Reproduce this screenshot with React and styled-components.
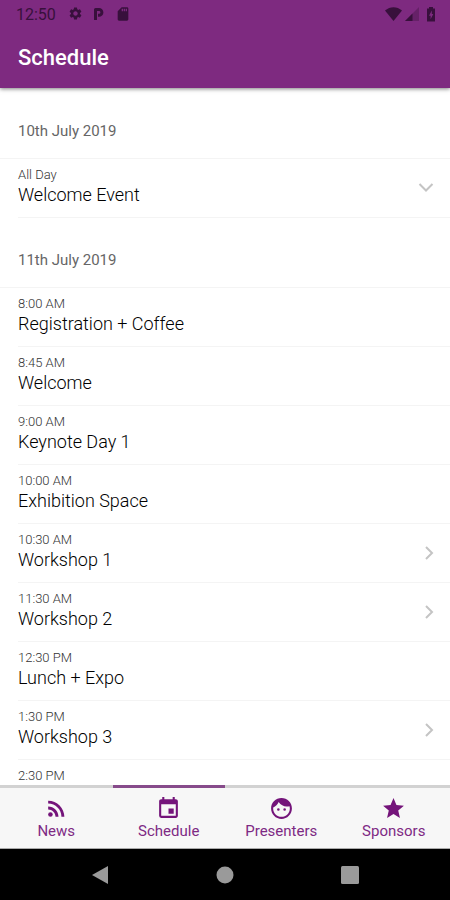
import styled, { createGlobalStyle } from "styled-components";
import {
  MdEvent,
  MdFace,
  MdRssFeed,
  MdSdCard,
  MdSettings,
  MdStar,
} from "react-icons/md";

const days = [
  {
    date: "10th July 2019",
    events: [{ time: "All Day", title: "Welcome Event", more: "down" }],
  },
  {
    date: "11th July 2019",
    events: [
      { time: "8:00 AM", title: "Registration + Coffee" },
      { time: "8:45 AM", title: "Welcome" },
      { time: "9:00 AM", title: "Keynote Day 1" },
      { time: "10:00 AM", title: "Exhibition Space" },
      { time: "10:30 AM", title: "Workshop 1", more: "right" },
      { time: "11:30 AM", title: "Workshop 2", more: "right" },
      { time: "12:30 PM", title: "Lunch + Expo" },
      { time: "1:30 PM", title: "Workshop 3", more: "right" },
      { time: "2:30 PM", title: "" },
    ],
  },
];

const tabs = [
  { label: "News", Icon: MdRssFeed },
  { label: "Schedule", Icon: MdEvent },
  { label: "Presenters", Icon: MdFace },
  { label: "Sponsors", Icon: MdStar },
];

const Chevron = ({ direction }) => (
  <ChevronIcon viewBox="0 0 16 16" aria-hidden="true">
    {direction === "down" ? (
      <path d="M1.5 4 8 10.500l6.500-6.500" />
    ) : (
      <path d="M5 2l6 6-6 6" />
    )}
  </ChevronIcon>
);

const StatusBar = () => (
  <Status>
    <span>12:50</span>
    <StatusIcons>
      <MdSettings size={15} />
      <svg width="12" height="15" viewBox="0 0 12 15">
        <path
          d="M2.500 14V3.500H6a2.900 2.900 0 0 1 0 5.800H5"
          fill="none"
          stroke="currentColor"
          strokeWidth="3"
          strokeLinejoin="round"
        />
      </svg>
      <MdSdCard size={16} />
    </StatusIcons>
    <Signals>
      <svg width="17" height="14" viewBox="0 0 17 14">
        <path d="M0 3.500C5-1 12-1 17 3.500L8.500 14z" fill="currentColor" />
      </svg>
      <svg width="14" height="14" viewBox="0 0 14 14">
        <path d="M14 0v14H0z" fill="currentColor" opacity="0.35" />
        <path d="M7.500 6.500V14H0z" fill="currentColor" />
      </svg>
      <svg width="10" height="15" viewBox="0 0 10 15">
        <path
          d="M3 0h4v1.500h2v13H1v-13h2zM5.800 3.500 3 8.700h1.600v3.500L7.300 7H5.800z"
          fill="currentColor"
          fillRule="evenodd"
        />
      </svg>
    </Signals>
  </Status>
);

const App = () => {
  return (
    <>
      <GlobalStyle />
      <Screen>
        <Header>
          <StatusBar />
          <h1>Schedule</h1>
        </Header>
        <Content>
          {days.map(({ date, events }) => (
            <section key={date}>
              <DayTitle>{date}</DayTitle>
              <EventList>
                {events.map(({ time, title, more }) => (
                  <EventItem key={time}>
                    <EventRow
                      as={more ? "button" : "div"}
                      type={more ? "button" : undefined}
                      $expand={more === "down"}
                    >
                      <EventText>
                        <Time>{time}</Time>
                        <Title>{title}</Title>
                      </EventText>
                      {more && <Chevron direction={more} />}
                    </EventRow>
                  </EventItem>
                ))}
              </EventList>
            </section>
          ))}
        </Content>
        <TabBar>
          {tabs.map(({ label, Icon }) => (
            <Tab
              key={label}
              href={`#${label.toLowerCase()}`}
              $active={label === "Schedule"}
            >
              <Icon size={25} />
              {label}
            </Tab>
          ))}
        </TabBar>
        <SystemBar>
          <button type="button" aria-label="Back">
            <svg width="18" height="18" viewBox="0 0 18 18">
              <path d="M17 0v18L1 9z" />
            </svg>
          </button>
          <button type="button" aria-label="Home">
            <svg width="18" height="18" viewBox="0 0 18 18">
              <circle cx="9" cy="9" r="8.500" />
            </svg>
          </button>
          <button type="button" aria-label="Recent apps">
            <svg width="18" height="18" viewBox="0 0 18 18">
              <rect width="18" height="18" rx="1.500" />
            </svg>
          </button>
        </SystemBar>
      </Screen>
    </>
  );
};

export default App;

const GlobalStyle = createGlobalStyle`
  * {
    box-sizing: border-box;
  }
  body {
    margin: 0;
    background: #fff;
    font-family: Roboto, sans-serif;
  }
  button {
    font-family: inherit;
    border: 0;
    padding: 0;
    background: transparent;
    cursor: pointer;
  }
`;

const Screen = styled.div`
  display: flex;
  flex-direction: column;
  height: 100vh;
`;

const Header = styled.header`
  flex: none;
  z-index: 1;
  background: #7e2a80;
  box-shadow: 0 1px 4px rgba(0, 0, 0, 0.5);

  h1 {
    margin: 0;
    padding: 0 18px;
    color: #fff;
    font-size: 22px;
    font-weight: 500;
    line-height: 60px;
  }
`;

const Status = styled.div`
  display: flex;
  align-items: center;
  height: 28px;
  padding: 0 14px 0 16px;
  color: #38103c;
  font-size: 16px;
`;

const StatusIcons = styled.div`
  display: flex;
  gap: 10px;
  margin-left: 12px;
`;

const Signals = styled.div`
  display: flex;
  align-items: center;
  gap: 3px;
  margin-left: auto;

  svg:last-child {
    margin-left: 4px;
  }
`;

const Content = styled.main`
  flex: 1;
  min-height: 0;
  padding-top: 1px;
  overflow: hidden;
`;

const DayTitle = styled.h2`
  margin: 0;
  padding: 32px 18px 17px;
  border-bottom: 1px solid #f4f4f4;
  color: #666;
  font-size: 15px;
  font-weight: 400;
  line-height: 20px;
`;

const EventList = styled.ul`
  margin: 0;
  padding: 0;
  list-style: none;
`;

const EventItem = styled.li`
  padding-left: 18px;
`;

const EventRow = styled.div`
  display: flex;
  align-items: center;
  justify-content: space-between;
  width: 100%;
  height: 59px;
  padding-right: ${({ $expand }) => ($expand ? "16px" : "13px")};
  border-bottom: 1px solid #f4f4f4;
  text-align: left;
`;

const EventText = styled.span`
  padding-bottom: 3px;
`;

const Time = styled.span`
  display: block;
  color: #333;
  font-size: 13px;
  font-weight: 300;
  line-height: 17px;
`;

const Title = styled.span`
  display: block;
  min-height: 24px;
  color: #000;
  font-size: 18px;
  font-weight: 300;
  line-height: 24px;
`;

const ChevronIcon = styled.svg`
  width: 16px;
  height: 16px;
  fill: none;
  stroke: #c4c4c4;
  stroke-width: 2;
`;

const TabBar = styled.nav`
  display: flex;
  flex: none;
  height: 64px;
  background: #f7f7f7;
  border-bottom: 1px solid #aaa;
`;

const Tab = styled.a`
  display: flex;
  flex: 1;
  flex-direction: column;
  align-items: center;
  padding-top: 8px;
  border-top: 3px solid ${({ $active }) => ($active ? "#874b8b" : "#d2d2d2")};
  color: #7e2a84;
  font-size: 15px;
  line-height: 20px;
  text-decoration: none;

  svg {
    color: #74147a;
  }
`;

const SystemBar = styled.footer`
  display: flex;
  flex: none;
  align-items: center;
  justify-content: center;
  height: 51px;
  background: #000;

  button {
    display: flex;
    justify-content: center;
    width: 125px;
  }

  svg {
    fill: #9a9a9a;
  }
`;
